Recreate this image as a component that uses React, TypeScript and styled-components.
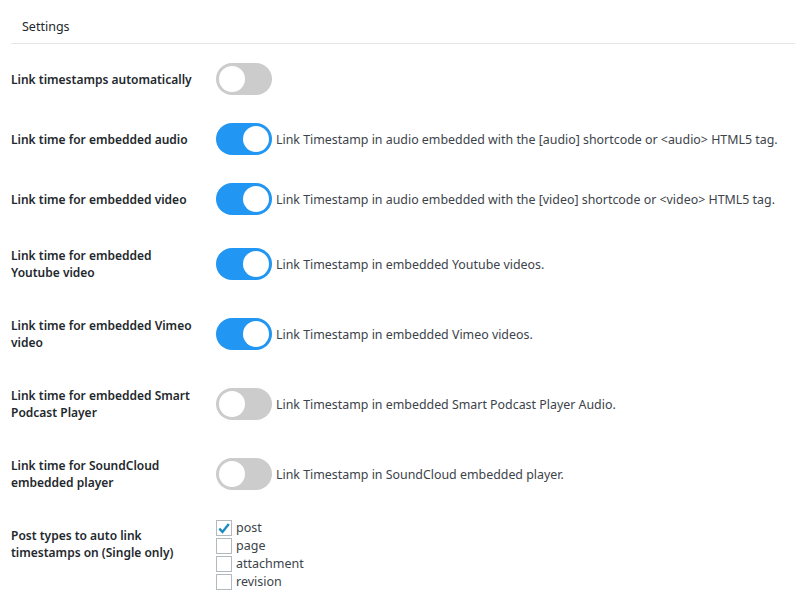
import React, { useState } from 'react';
import styled, { createGlobalStyle } from 'styled-components';

const GlobalStyle = createGlobalStyle`
  body {
    margin: 0;
    background: #fff;
    font-family: "Noto Sans", "Open Sans", sans-serif;
    font-size: 12.5px;
    color: #32373c;
  }
`;

const rows = [
  { label: 'Link timestamps automatically', on: false, desc: '' },
  { label: 'Link time for embedded audio', on: true, desc: 'Link Timestamp in audio embedded with the [audio] shortcode or <audio> HTML5 tag.' },
  { label: 'Link time for embedded video', on: true, desc: 'Link Timestamp in audio embedded with the [video] shortcode or <video> HTML5 tag.' },
  { label: 'Link time for embedded Youtube video', on: true, desc: 'Link Timestamp in embedded Youtube videos.' },
  { label: 'Link time for embedded Vimeo video', on: true, desc: 'Link Timestamp in embedded Vimeo videos.' },
  { label: 'Link time for embedded Smart Podcast Player', on: false, desc: 'Link Timestamp in embedded Smart Podcast Player Audio.' },
  { label: 'Link time for SoundCloud embedded player', on: false, desc: 'Link Timestamp in SoundCloud embedded player.' },
];

const postTypes = [
  { name: 'post', checked: true },
  { name: 'page', checked: false },
  { name: 'attachment', checked: false },
  { name: 'revision', checked: false },
];

function App() {
  const [toggles, setToggles] = useState(rows.map((r) => r.on));
  const [types, setTypes] = useState(postTypes.map((t) => t.checked));

  return (
    <Page>
      <GlobalStyle />
      <Header>Settings</Header>
      <Table>
        {rows.map((r, i) => (
          <Row key={r.label}>
            <Label>{r.label}</Label>
            <Field>
              <Switch
                $on={toggles[i]}
                onClick={() => setToggles(toggles.map((v, j) => (j === i ? !v : v)))}
              />
              {r.desc && <Desc>{r.desc}</Desc>}
            </Field>
          </Row>
        ))}
        <Row $top>
          <Label>Post types to auto link timestamps on (Single only)</Label>
          <CheckList>
            {postTypes.map((t, i) => (
              <CheckItem key={t.name}>
                <Box
                  $checked={types[i]}
                  onClick={() => setTypes(types.map((v, j) => (j === i ? !v : v)))}
                >
                  {types[i] && (
                    <svg width="15" height="15" viewBox="0 0 14 14">
                      <path d="M2.3 7.2 L5.5 10.4 L11.8 2.4" fill="none" stroke="#1e8cbe" strokeWidth="2.4" />
                    </svg>
                  )}
                </Box>
                {t.name}
              </CheckItem>
            ))}
          </CheckList>
        </Row>
      </Table>
    </Page>
  );
}

const Page = styled.div`
  height: 593px;
  overflow: hidden;
  padding: 0 2px 0 11px;
`;
const Header = styled.div`
  font-size: 12.5px;
  color: #23282d;
  padding: 18px 0 0 11px;
  height: 25px;
  border-bottom: 1px solid #e6e6e6;
`;
const Table = styled.div`
  display: flex;
  flex-direction: column;
  padding-top: 5px;
`;
const Row = styled.div<{ $top?: boolean }>`
  display: grid;
  grid-template-columns: 205px 1fr;
  align-items: ${(p) => (p.$top ? 'start' : 'center')};
  padding: 14px 0;
`;
const Label = styled.div`
  font-weight: 600;
  font-size: 12px;
  color: #23282d;
  line-height: 17px;
  width: 190px;
  padding: 4px 0;
`;
const Field = styled.div`
  display: flex;
  align-items: center;
`;
const Switch = styled.span<{ $on: boolean }>`
  position: relative;
  width: 56px;
  height: 32px;
  border-radius: 16px;
  background: ${(p) => (p.$on ? '#2196f3' : '#cccccc')};
  cursor: pointer;
  flex-shrink: 0;
  &::after {
    content: '';
    position: absolute;
    top: 3px;
    left: ${(p) => (p.$on ? '27px' : '3px')};
    width: 26px;
    height: 26px;
    border-radius: 50%;
    background: #fff;
  }
`;
const Desc = styled.span`
  color: #3c434a;
  margin-left: 4px;
  font-size: 12.4px;
`;
const CheckList = styled.div`
  display: flex;
  flex-direction: column;
  gap: 2px;
  margin-top: -3px;
`;
const CheckItem = styled.label`
  display: flex;
  align-items: center;
  gap: 4px;
  line-height: 16px;
  color: #3c434a;
`;
const Box = styled.span<{ $checked: boolean }>`
  width: 14px;
  height: 14px;
  border: 1px solid #b4b9be;
  background: #fff;
  display: flex;
  align-items: center;
  justify-content: center;
  cursor: pointer;
`;

export default App;
